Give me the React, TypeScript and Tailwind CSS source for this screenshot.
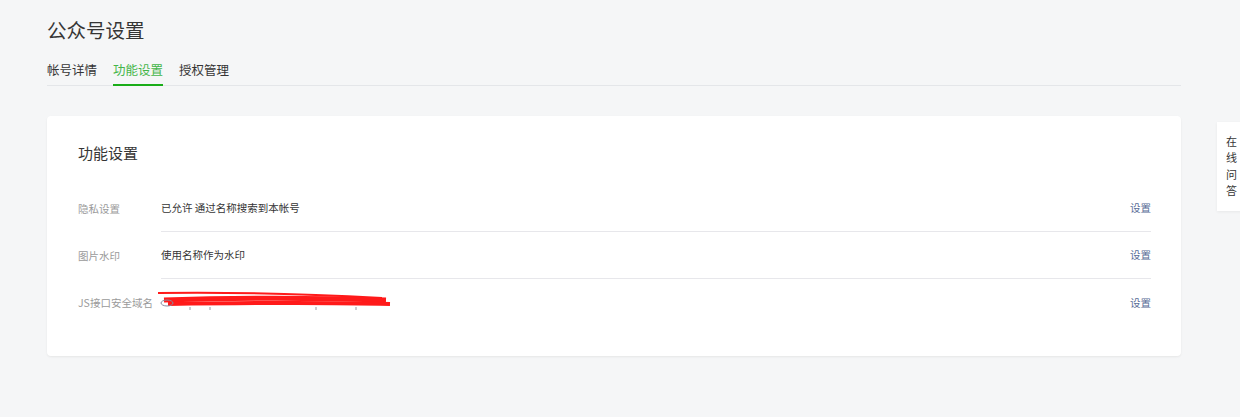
import React from "react";

const rows = [
  { label: "隐私设置", value: "已允许 通过名称搜索到本帐号" },
  { label: "图片水印", value: "使用名称作为水印" },
  { label: "JS接口安全域名", value: "", redacted: true },
];

function Scribble() {
  return (
    <svg className="absolute left-[-5px] top-[-7px]" width="236" height="22" viewBox="0 0 236 22">
      <path d="M2 3 C60 2 130 3 226 8" stroke="#ff1a1a" strokeWidth="2" fill="none" />
      <path d="M8 10 C70 8 140 7 230 10" stroke="#ff1a1a" strokeWidth="5" fill="none" />
      <path d="M12 14 C80 13 160 12 234 14" stroke="#ff1a1a" strokeWidth="4" fill="none" />
      <ellipse cx="11" cy="13" rx="6" ry="3" stroke="#8a8aa0" strokeWidth="1" fill="none" />
      <path d="M34 17 v3 M54 17 v3 M160 17 v3 M200 17 v3" stroke="#9a9aa8" strokeWidth="1" />
    </svg>
  );
}

export default function App() {
  return (
    <div
      className="min-h-[417px] w-[1240px] bg-[#f5f6f7] relative overflow-hidden"
      style={{ fontFamily: '"Noto Sans CJK SC", "Liberation Sans", sans-serif' }}
    >
      <div className="ml-[47px] w-[1134px]">
        {/* Header */}
        <h1 className="pt-[15px] text-[19.5px] leading-[30px] text-[#353535] font-normal">公众号设置</h1>
        <div className="mt-[11px] flex gap-[16px] border-b border-[#e4e6e9] text-[12.5px] text-[#353535]">
          <span className="leading-[27px] pb-[1px]">帐号详情</span>
          <span className="leading-[27px] pb-[1px] text-[#44b549] border-b-2 border-[#1aad19] -mb-[1px]">功能设置</span>
          <span className="leading-[27px] pb-[1px]">授权管理</span>
        </div>

        {/* Card */}
        <div className="mt-[30px] bg-white rounded-[4px] shadow-[0_1px_2px_rgba(150,150,150,0.15)] pt-[25px] pb-[30px] pl-[31px] pr-[30px]">
          <h2 className="text-[15px] leading-[24px] text-[#353535] font-normal">功能设置</h2>
          <div className="mt-[20px]">
            {rows.map((r, i) => (
              <div key={r.label} className="flex items-stretch text-[10.5px]">
                <div className="w-[83px] text-[#9a9a9a] flex items-center h-[47px] whitespace-nowrap">{r.label}</div>
                <div
                  className={`flex-1 flex items-center h-[47px] ${
                    i < rows.length - 1 ? "border-b border-[#e7e7eb]" : ""
                  }`}
                >
                  <div className="flex-1 text-[#353535] relative">
                    {r.redacted ? (
                      <span className="relative inline-block w-[230px] h-[14px] align-middle">
                        <Scribble />
                      </span>
                    ) : (
                      r.value
                    )}
                  </div>
                  <a className="text-[#576b95] cursor-pointer">设置</a>
                </div>
              </div>
            ))}
          </div>
        </div>
      </div>

      {/* Floating Q&A */}
      <div className="absolute left-[1217px] top-[122px] w-[30px] h-[89px] bg-white shadow-[0_1px_3px_rgba(0,0,0,0.06)] flex flex-col pl-[9px] pt-[11px] text-[11px] leading-[16.3px] text-[#353535]">
        <span>在</span>
        <span>线</span>
        <span>问</span>
        <span>答</span>
      </div>
    </div>
  );
}
